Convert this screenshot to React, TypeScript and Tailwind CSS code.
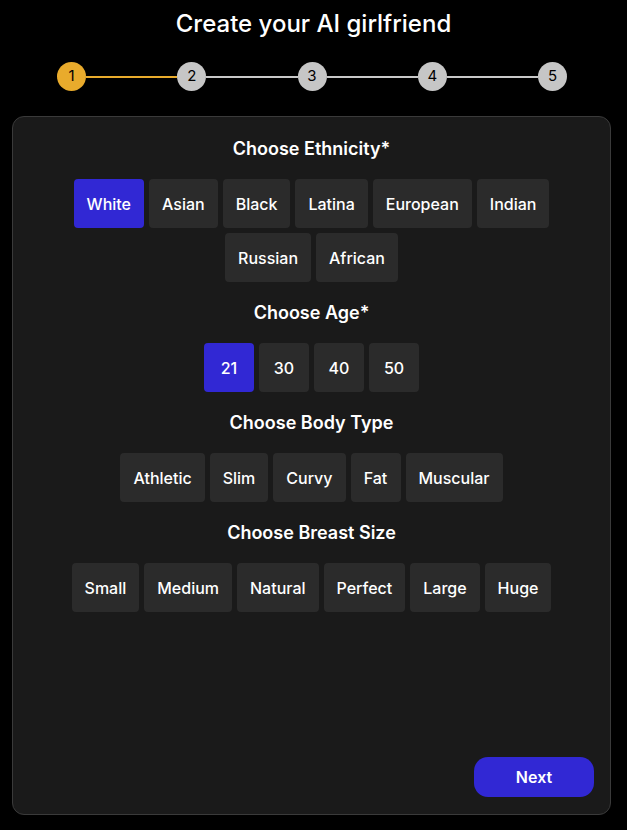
import { useState } from "react"

const steps = [1, 2, 3, 4, 5]

const sections = [
  {
    title: "Choose Ethnicity*",
    options: ["White", "Asian", "Black", "Latina", "European", "Indian", "Russian", "African"],
    selected: "White",
  },
  { title: "Choose Age*", options: ["21", "30", "40", "50"], selected: "21" },
  {
    title: "Choose Body Type",
    options: ["Athletic", "Slim", "Curvy", "Fat", "Muscular"],
    selected: "",
  },
  {
    title: "Choose Breast Size",
    options: ["Small", "Medium", "Natural", "Perfect", "Large", "Huge"],
    selected: "",
  },
]

function Stepper({ current }: { current: number }) {
  return (
    <div className="ml-[57px] mt-[22px] flex w-[510px] items-center">
      {steps.map((step, i) => (
        <div key={step} className={i === 0 ? "flex items-center" : "flex flex-1 items-center"}>
          {i > 0 && (
            <div className={i === current ? "h-[2px] flex-1 bg-[#e9ab2c]" : "h-[2px] flex-1 bg-[#c8c8c8]"} />
          )}
          <div
            className={
              step === current
                ? "flex h-[29px] w-[29px] items-center justify-center rounded-full bg-[#e9ab2c] text-[15px] text-black"
                : "flex h-[29px] w-[29px] items-center justify-center rounded-full bg-[#c6c6c6] text-[15px] text-black"
            }
          >
            {step}
          </div>
        </div>
      ))}
    </div>
  )
}

export default function App() {
  const [picked, setPicked] = useState<string[]>(sections.map((s) => s.selected))

  return (
    <div
      className="h-[830px] w-[627px] overflow-hidden bg-black text-white"
      style={{ fontFamily: "Inter, 'Noto Sans', sans-serif" }}
    >
      <h1 className="pt-2 text-center text-[24px] font-medium leading-8">
        Create your AI girlfriend
      </h1>

      <Stepper current={1} />

      <main className="ml-3 mt-[25px] flex h-[699px] w-[599px] flex-col rounded-xl border border-[#3a3a3a] bg-[#1a1a1a] pt-[18px]">
        {sections.map((section, si) => (
          <section key={section.title} className="mb-[17px] flex flex-col items-center">
            <h2 className="text-[18px] font-semibold leading-7">{section.title}</h2>
            <div className="mt-4 flex max-w-[490px] flex-wrap justify-center gap-[5px]">
              {section.options.map((opt) => (
                <button
                  key={opt}
                  onClick={() => setPicked((p) => p.map((v, i) => (i === si ? opt : v)))}
                  className={
                    picked[si] === opt
                      ? "h-[49px] min-w-[50px] rounded-[4px] bg-[#3128d4] px-[13px] text-[16px] font-medium text-white"
                      : "h-[49px] min-w-[50px] rounded-[4px] bg-[#2b2b2b] px-[13px] text-[16px] font-medium text-white"
                  }
                >
                  {opt}
                </button>
              ))}
            </div>
          </section>
        ))}

        <div className="flex-1" />
        <div className="mb-[17px] mr-4 flex justify-end">
          <button className="h-10 w-[120px] rounded-[14px] bg-[#3128d4] text-[16px] font-semibold text-white">
            Next
          </button>
        </div>
      </main>
    </div>
  )
}
